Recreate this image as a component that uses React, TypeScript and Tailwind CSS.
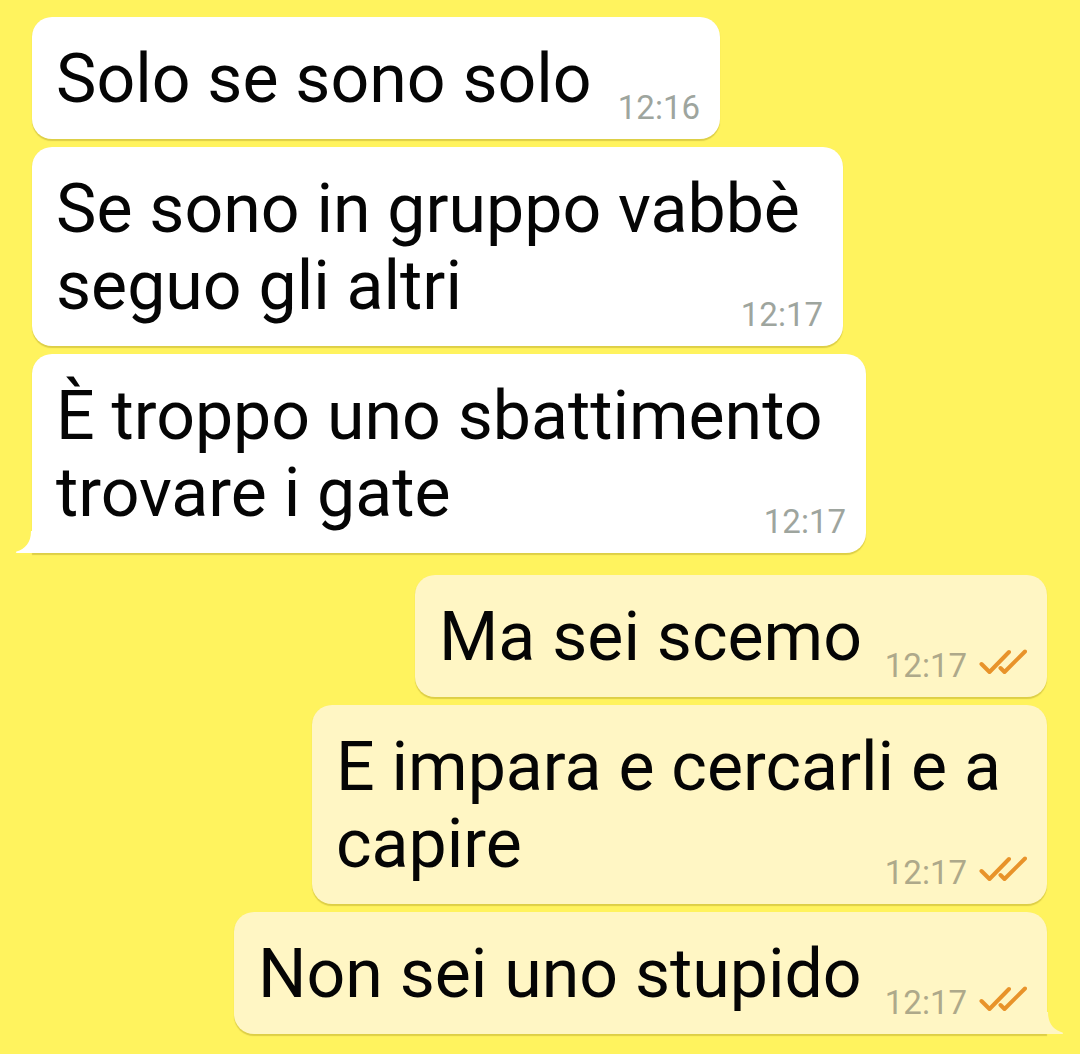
const messages = [
  { out: false, lines: ["Solo se sono solo"], time: "12:16", width: "w-[688px]" },
  { out: false, lines: ["Se sono in gruppo vabbè", "seguo gli altri"], time: "12:17", width: "w-[811px]" },
  { out: false, lines: ["È troppo uno sbattimento", "trovare i gate"], time: "12:17", width: "w-[834px]", tail: true },
  { out: true, lines: ["Ma sei scemo"], time: "12:17", width: "w-[632px]", first: true },
  { out: true, lines: ["E impara e cercarli e a", "capire"], time: "12:17", width: "w-[735px]" },
  { out: true, lines: ["Non sei uno stupido"], time: "12:17", width: "w-[813px]", tail: true },
];

function DoubleCheck() {
  return (
    <svg width="48" height="26" viewBox="0 0 48 26" fill="none" stroke="#e8932a" strokeWidth="4" strokeLinecap="round" strokeLinejoin="round">
      <path d="M2.5 15 L10.5 23 L30 3" />
      <path d="M21.5 19 L25.5 23 L46 2.5" />
    </svg>
  );
}

function Tail({ out }: { out: boolean }) {
  if (out) {
    return (
      <svg className="absolute -right-[17px] bottom-0" width="18" height="22" viewBox="0 0 18 22">
        <path d="M0 0 L2 0 C2 12 8 18 16.5 20.5 Q18 21.5 16 22 L0 22 Z" fill="#fff6c4" />
      </svg>
    );
  }
  return (
    <svg className="absolute -left-[17px] bottom-0" width="18" height="22" viewBox="0 0 18 22">
      <path d="M18 0 L16 0 C16 12 10 18 1.5 20.5 Q0 21.5 2 22 L18 22 Z" fill="#ffffff" />
    </svg>
  );
}

export default function App() {
  return (
    <div className="h-[1054px] overflow-hidden bg-[#fff35e] pt-[17px] font-['Roboto',sans-serif]">
      <div className="flex flex-col gap-[8px]">
        {messages.map((m, i) => (
          <div
            key={i}
            className={`flex ${m.out ? "justify-end pr-[33px]" : "justify-start pl-[32px]"} ${m.first ? "mt-[14px]" : ""}`}
          >
            <div
              className={`relative ${m.width} rounded-[20px] pl-[24px] pr-[20px] pt-[24px] pb-[16px] shadow-[0_1.5px_1px_rgba(120,100,0,0.25)] ${
                m.out ? "bg-[#fff6c4]" : "bg-white"
              } ${m.tail ? (m.out ? "rounded-br-none" : "rounded-bl-none") : ""}`}
            >
              {m.tail && <Tail out={m.out} />}
              <div className="flex flex-col">
                <div className="text-[68px] leading-[77px] text-[#050505]">
                  {m.lines.map((l) => (
                    <div key={l} className="whitespace-nowrap">
                      {l}
                    </div>
                  ))}
                </div>
                <div className="-mt-[27px] flex h-[32px] items-center gap-[12px] self-end">
                  <span className={`text-[33px] leading-none ${m.out ? "text-[#aea98a]" : "text-[#9ea59e]"}`}>
                    {m.time}
                  </span>
                  {m.out && (
                    <span className="-mt-[6px]">
                      <DoubleCheck />
                    </span>
                  )}
                </div>
              </div>
            </div>
          </div>
        ))}
      </div>
    </div>
  );
}
